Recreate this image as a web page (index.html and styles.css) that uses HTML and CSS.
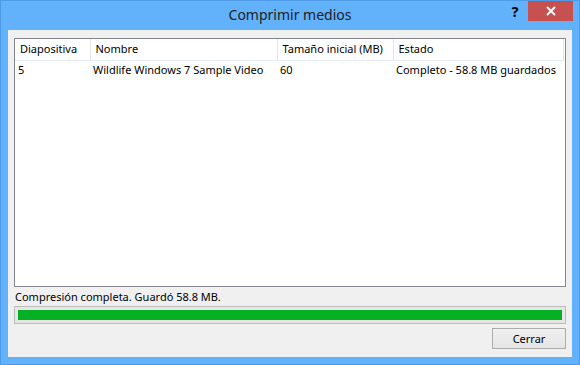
FILE: index.html
```html
<!DOCTYPE html>
<html lang="es">
<head>
    <meta charset="UTF-8">
    <title>Comprimir medios</title>
    <link rel="stylesheet" href="styles.css">
</head>
<body>
    <div class="window">
        <div class="titlebar">
            <div class="title">Comprimir medios</div>
            <div class="help">?</div>
            <div class="close">
                <svg width="10" height="10" viewBox="0 0 10 10">
                    <path d="M1 1 L9 9 M9 1 L1 9" stroke="#fff" stroke-width="2"/>
                </svg>
            </div>
        </div>

        <div class="client">
            <div class="list">
                <table>
                    <colgroup>
                        <col class="c1"><col class="c2"><col class="c3"><col class="c4"><col>
                    </colgroup>
                    <thead>
                        <tr>
                            <th>Diapositiva</th>
                            <th>Nombre</th>
                            <th>Tamaño inicial (MB)</th>
                            <th>Estado</th>
                            <th class="filler"></th>
                        </tr>
                    </thead>
                    <tbody>
                        <tr>
                            <td>5</td>
                            <td>Wildlife Windows 7 Sample Video</td>
                            <td>60</td>
                            <td>Completo - 58.8 MB guardados</td>
                            <td></td>
                        </tr>
                    </tbody>
                </table>
            </div>

            <div class="status">Compresión completa. Guardó 58.8 MB.</div>

            <div class="progress">
                <div class="progress-fill"></div>
            </div>

            <div class="actions">
                <button type="button">Cerrar</button>
            </div>
        </div>
    </div>
</body>
</html>
```

FILE: styles.css
```css
* {
    box-sizing: border-box;
    margin: 0;
    padding: 0;
}

body {
    width: 580px;
    height: 365px;
    font-family: "Noto Sans", "Open Sans", sans-serif;
    font-size: 11px;
    color: #000;
}

.window {
    width: 580px;
    height: 365px;
    display: flex;
    flex-direction: column;
    background-color: #62b1fb;
    border: 1px solid #4f9ae6;
}

.titlebar {
    height: 29px;
    display: flex;
    align-items: flex-start;
}

/* padding équilibre la largeur des boutons à droite */
.title {
    flex: 1;
    padding-left: 77px;
    text-align: center;
    font-size: 14px;
    line-height: 28px;
    color: #1e1e1e;
}

.help {
    width: 26px;
    text-align: center;
    font-weight: bold;
    font-size: 14px;
    line-height: 22px;
    color: #000;
}

.close {
    width: 45px;
    height: 20px;
    margin-right: 6px;
    background-color: #c75050;
    display: flex;
    align-items: center;
    justify-content: center;
}

.client {
    flex: 1;
    margin: 0 7px 7px;
    padding: 8px 6px 8px;
    background-color: #f0f0f0;
    display: flex;
    flex-direction: column;
}

.list {
    height: 249px;
    background-color: #fff;
    border: 1px solid #828790;
    overflow: hidden;
}

table {
    border-collapse: collapse;
    table-layout: fixed;
    width: 100%;
}

.c1 { width: 75px; }
.c2 { width: 187px; }
.c3 { width: 116px; }
.c4 { width: 170px; }

th {
    height: 21px;
    font-weight: normal;
    text-align: left;
    padding: 0 0 1px 5px;
    border-right: 1px solid #e5e5e5;
    border-bottom: 1px solid #e6ecf3;
    white-space: nowrap;
    overflow: hidden;
}

th.filler {
    border-right: none;
    border-bottom: none;
}

td {
    height: 18px;
    padding: 0 0 0 3px;
    white-space: nowrap;
    overflow: hidden;
}

.status {
    height: 19px;
    line-height: 19px;
    padding-left: 1px;
}

.progress {
    height: 18px;
    padding: 3px;
    background-color: #e6e6e6;
    border: 1px solid #bcbcbc;
}

.progress-fill {
    height: 100%;
    background-color: #06b025;
}

.actions {
    margin-top: 4px;
    display: flex;
    justify-content: flex-end;
}

button {
    width: 74px;
    height: 21px;
    font-family: inherit;
    font-size: 11px;
    color: #000;
    border: 1px solid #acacac;
    background: linear-gradient(#f0f0f0, #e5e5e5);
}
```
